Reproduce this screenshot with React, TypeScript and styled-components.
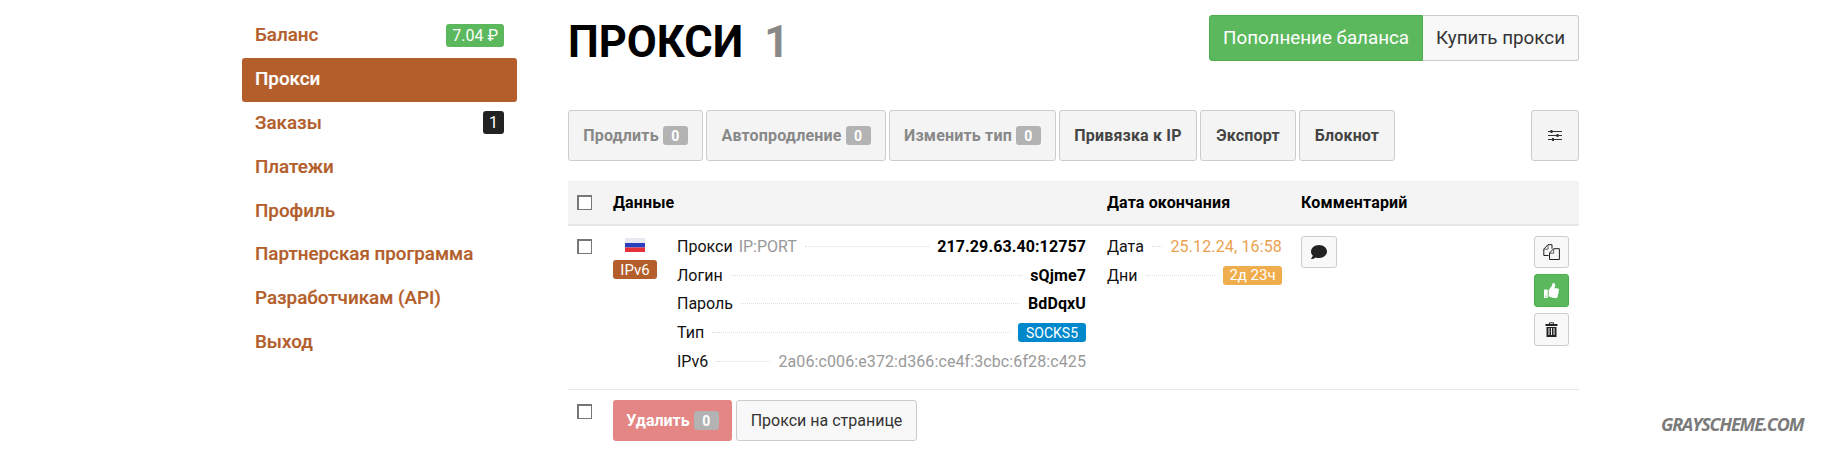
import React from "react";
import styled, { createGlobalStyle, css } from "styled-components";
import { FaComment, FaThumbsUp } from "react-icons/fa";

const GlobalStyle = createGlobalStyle`
  html, body {
    margin: 0;
    padding: 0;
    background: #fff;
  }
  body {
    font-family: Roboto, "Liberation Sans", sans-serif;
    color: #111;
  }
`;

const Page = styled.div`
  display: flex;
  gap: 51px;
  width: 1821px;
  height: 457px;
  padding: 14px 0 0 242px;
  box-sizing: border-box;
  overflow: hidden;
`;

const Sidebar = styled.nav`
  width: 275px;
  flex: none;
  display: flex;
  flex-direction: column;
`;

const NavItem = styled.a<{ $active?: boolean }>`
  height: 43.8px;
  padding: 0 13px 1px;
  box-sizing: border-box;
  display: flex;
  align-items: center;
  justify-content: space-between;
  border-radius: 3px;
  font-size: 18.8px;
  font-weight: 500;
  -webkit-text-stroke: 0.2px currentColor;
  color: ${({ $active }) => ($active ? "#fff" : "#b35e2b")};
  background: ${({ $active }) => ($active ? "#b35e2b" : "transparent")};
`;

const NavBadge = styled.span<{ $color: string }>`
  height: 23px;
  padding: 0 6px;
  display: flex;
  align-items: center;
  border-radius: 3px;
  font-size: 16px;
  font-weight: 400;
  -webkit-text-stroke: 0;
  color: #fff;
  background: ${({ $color }) => $color};
`;

const Main = styled.main`
  width: 1011px;
  flex: none;
`;

const Header = styled.header`
  height: 96px;
  display: flex;
  justify-content: space-between;
  align-items: flex-start;
`;

const Title = styled.h1`
  margin: 2px 0 0;
  font-size: 43.5px;
  line-height: 54px;
  font-weight: 700;
  color: #000;
  display: flex;
  gap: 21px;
`;

const TitleCount = styled.span`
  color: #888;
`;

const HeaderActions = styled.div`
  display: flex;
  margin-top: 1px;
`;

const HeaderButton = styled.button<{ $primary?: boolean }>`
  height: 46px;
  padding: 0 13px;
  font: 400 18.8px Roboto, sans-serif;
  ${({ $primary }) =>
    $primary
      ? css`
          color: #fff;
          background: #5cb85c;
          border: 1px solid #4cae4c;
          border-radius: 3px 0 0 3px;
        `
      : css`
          color: #333;
          background: #f8f8f8;
          border: 1px solid #ccc;
          border-left: 0;
          border-radius: 0 3px 3px 0;
        `}
`;

const Toolbar = styled.div`
  height: 51px;
  display: flex;
  gap: 3px;
  margin-bottom: 20px;
`;

const ToolButton = styled.button<{ $disabled?: boolean; $width: number }>`
  width: ${({ $width }) => $width}px;
  height: 51px;
  padding: 0;
  display: flex;
  align-items: center;
  justify-content: center;
  gap: 4px;
  background: #f4f4f4;
  border: 1px solid #ccc;
  border-radius: 3px;
  font: 700 16px Roboto, sans-serif;
  letter-spacing: 0.18px;
  color: ${({ $disabled }) => ($disabled ? "#888" : "#444")};
`;

const ToolSpacer = styled.div`
  flex: 1;
`;

const CountBadge = styled.span`
  min-width: 25px;
  height: 19px;
  display: inline-flex;
  align-items: center;
  justify-content: center;
  border-radius: 3px;
  background: #b3b3b3;
  color: #fff;
  font-size: 14px;
  font-weight: 700;
`;

const Checkbox = styled.span`
  display: block;
  width: 15px;
  height: 15px;
  box-sizing: border-box;
  background: #fff;
  border: 1px solid #777;
  border-top-width: 2px;
  border-left-width: 2px;
`;

const columns = css`
  display: grid;
  grid-template-columns: 45px 494px 194px 1fr;
`;

const TableHead = styled.div`
  ${columns}
  height: 45px;
  box-sizing: border-box;
  align-items: center;
  background: #f4f4f4;
  border-bottom: 2px solid #e6e6e6;
  font-size: 16px;
  font-weight: 700;
  letter-spacing: 0.15px;
  color: #000;
`;

const CheckCell = styled.div`
  padding-left: 9px;
`;

const TableRow = styled.div`
  ${columns}
  height: 164px;
  box-sizing: border-box;
  padding-top: 6px;
  border-bottom: 1px solid #e6e6e6;
`;

const RowCheck = styled(CheckCell)`
  padding-top: 7px;
`;

const DataCell = styled.div`
  display: flex;
`;

const FlagCell = styled.div`
  width: 64px;
  flex: none;
  display: flex;
  flex-direction: column;
  align-items: flex-start;
  gap: 8px;
  padding-top: 6px;
`;

const Flag = styled.svg`
  width: 20px;
  height: 14px;
  margin-left: 12px;
  display: block;
`;

const TypeTag = styled.span`
  width: 44px;
  height: 19px;
  display: flex;
  align-items: center;
  justify-content: center;
  border-radius: 3px;
  background: #b35e2b;
  color: #fff;
  font-size: 15px;
`;

const DetailList = styled.div<{ $width: number }>`
  width: ${({ $width }) => $width}px;
  display: flex;
  flex-direction: column;
`;

const DetailRow = styled.div`
  height: 28.75px;
  display: flex;
  align-items: center;
  font-size: 16px;
  color: #111;
`;

const Hint = styled.span`
  color: #999;
  margin-left: 6px;
`;

const Leader = styled.span`
  flex: 1;
  margin: 0 8px;
  border-bottom: 1px dotted #ddd;
`;

const StrongValue = styled.span`
  font-weight: 700;
  color: #000;
  letter-spacing: 0.1px;
`;

const MutedValue = styled.span`
  color: #999;
  letter-spacing: 0.1px;
`;

const DateValue = styled.span`
  color: #eba24f;
  letter-spacing: 0.15px;
`;

const Pill = styled.span<{ $color: string; $width: number; $size: number }>`
  width: ${({ $width }) => $width}px;
  height: 19px;
  display: flex;
  align-items: center;
  justify-content: center;
  border-radius: 3px;
  background: ${({ $color }) => $color};
  color: #fff;
  font-size: ${({ $size }) => $size}px;
`;

const DateCell = styled.div`
  display: flex;
`;

const ActionsCell = styled.div`
  display: flex;
  justify-content: space-between;
  padding: 4px 10px 0 0;
`;

const ActionStack = styled.div`
  display: flex;
  flex-direction: column;
  gap: 6px;
`;

const IconButton = styled.button<{ $success?: boolean; $wide?: boolean; $height: number }>`
  width: ${({ $wide }) => ($wide ? 36 : 35)}px;
  height: ${({ $height }) => $height}px;
  padding: 0;
  display: flex;
  align-items: center;
  justify-content: center;
  border-radius: 3px;
  border: 1px solid ${({ $success }) => ($success ? "#4cae4c" : "#ccc")};
  background: ${({ $success }) => ($success ? "#5cb85c" : "#f8f8f8")};
  color: ${({ $success }) => ($success ? "#fff" : "#222")};
`;

const Footer = styled.div`
  display: flex;
  align-items: flex-start;
  gap: 4px;
  padding-top: 10px;
`;

const FooterCheck = styled(CheckCell)`
  width: 45px;
  box-sizing: border-box;
  margin-right: -4px;
  padding-top: 4px;
`;

const DeleteButton = styled.button`
  width: 119px;
  height: 41px;
  padding: 0;
  display: flex;
  align-items: center;
  justify-content: center;
  gap: 4px;
  border: 0;
  border-radius: 3px;
  background: #e38684;
  color: #fff;
  font: 700 16px Roboto, sans-serif;
`;

const PageSizeButton = styled.button`
  width: 181px;
  height: 41px;
  padding: 0;
  background: #f8f8f8;
  border: 1px solid #ccc;
  border-radius: 3px;
  color: #333;
  font: 400 16px Roboto, sans-serif;
`;

const Watermark = styled.div`
  position: absolute;
  left: 1661px;
  top: 412px;
  font-family: "Open Sans", sans-serif;
  font-style: italic;
  font-weight: 700;
  font-size: 18px;
  letter-spacing: -1.15px;
  color: #7b7b7b;
`;

const SlidersIcon = () => (
  <svg width="14" height="13" viewBox="0 0 14 13" fill="none" stroke="#333">
    <path d="M0 2.5h14M0 6.5h14M0 10.5h14" strokeWidth="1" />
    <path d="M3.5 1v3M9.5 5v3M5 9v3" strokeWidth="2" />
  </svg>
);

const CopyIcon = () => (
  <svg width="17" height="16" viewBox="0 0 17 16" fill="none" stroke="#222" strokeWidth="1">
    <path d="M5.5 11.5H.8V5L5 .7h4v4" />
    <path d="M1 5.2h4V1" strokeWidth=".7" />
    <path d="M6.5 15.5V9l4.2-4.3h5.7v10.8z" fill="#f8f8f8" />
    <path d="M6.7 9.2h4V5" strokeWidth=".7" />
  </svg>
);

const TrashIcon = () => (
  <svg width="13" height="15" viewBox="0 0 13 15">
    <path d="M4.5 2V.8h4V2" fill="none" stroke="#333" />
    <path d="M.5 2h12v2H.5zM1.5 5h10v10h-10z" fill="#222" />
    <path d="M4 6v7M6.5 6v7M9 6v7" stroke="#f8f8f8" />
  </svg>
);

const navItems = ["Заказы", "Платежи", "Профиль", "Партнерская программа", "Разработчикам (API)", "Выход"];

const App: React.FC = () => {
  return (
    <>
      <GlobalStyle />
      <Page>
        <Sidebar>
          <NavItem>
            Баланс
            <NavBadge $color="#5cb85c">7.04 ₽</NavBadge>
          </NavItem>
          <NavItem $active>Прокси</NavItem>
          {navItems.map((item) => (
            <NavItem key={item}>
              {item}
              {item === "Заказы" && <NavBadge $color="#222">1</NavBadge>}
            </NavItem>
          ))}
        </Sidebar>
        <Main>
          <Header>
            <Title>
              ПРОКСИ <TitleCount>1</TitleCount>
            </Title>
            <HeaderActions>
              <HeaderButton $primary>Пополнение баланса</HeaderButton>
              <HeaderButton>Купить прокси</HeaderButton>
            </HeaderActions>
          </Header>
          <Toolbar>
            <ToolButton $disabled $width={135}>
              Продлить <CountBadge>0</CountBadge>
            </ToolButton>
            <ToolButton $disabled $width={180}>
              Автопродление <CountBadge>0</CountBadge>
            </ToolButton>
            <ToolButton $disabled $width={167}>
              Изменить тип <CountBadge>0</CountBadge>
            </ToolButton>
            <ToolButton $width={138}>Привязка к IP</ToolButton>
            <ToolButton $width={96}>Экспорт</ToolButton>
            <ToolButton $width={96}>Блокнот</ToolButton>
            <ToolSpacer />
            <ToolButton $width={48}>
              <SlidersIcon />
            </ToolButton>
          </Toolbar>
          <TableHead>
            <CheckCell>
              <Checkbox />
            </CheckCell>
            <div>Данные</div>
            <div>Дата окончания</div>
            <div>Комментарий</div>
          </TableHead>
          <TableRow>
            <RowCheck>
              <Checkbox />
            </RowCheck>
            <DataCell>
              <FlagCell>
                <Flag viewBox="0 0 20 14">
                  <rect width="20" height="5" fill="#e8e8f0" />
                  <rect y="5" width="20" height="4.5" fill="#2a3fc0" />
                  <rect y="9.5" width="20" height="4.5" fill="#e8303a" />
                </Flag>
                <TypeTag>IPv6</TypeTag>
              </FlagCell>
              <DetailList $width={409}>
                <DetailRow>
                  Прокси<Hint>IP:PORT</Hint>
                  <Leader />
                  <StrongValue>217.29.63.40:12757</StrongValue>
                </DetailRow>
                <DetailRow>
                  Логин
                  <Leader />
                  <StrongValue>sQjme7</StrongValue>
                </DetailRow>
                <DetailRow>
                  Пароль
                  <Leader />
                  <StrongValue>BdDqxU</StrongValue>
                </DetailRow>
                <DetailRow>
                  Тип
                  <Leader />
                  <Pill $color="#0088cc" $width={68} $size={14}>SOCKS5</Pill>
                </DetailRow>
                <DetailRow>
                  IPv6
                  <Leader />
                  <MutedValue>2a06:c006:e372:d366:ce4f:3cbc:6f28:c425</MutedValue>
                </DetailRow>
              </DetailList>
            </DataCell>
            <DateCell>
              <DetailList $width={175}>
                <DetailRow>
                  Дата
                  <Leader />
                  <DateValue>25.12.24, 16:58</DateValue>
                </DetailRow>
                <DetailRow>
                  Дни
                  <Leader />
                  <Pill $color="#f0ad4e" $width={59} $size={15}>2д 23ч</Pill>
                </DetailRow>
              </DetailList>
            </DateCell>
            <ActionsCell>
              <IconButton $wide $height={32}>
                <FaComment size={16} />
              </IconButton>
              <ActionStack>
                <IconButton $height={32}>
                  <CopyIcon />
                </IconButton>
                <IconButton $success $height={33}>
                  <FaThumbsUp size={15} />
                </IconButton>
                <IconButton $height={33}>
                  <TrashIcon />
                </IconButton>
              </ActionStack>
            </ActionsCell>
          </TableRow>
          <Footer>
            <FooterCheck>
              <Checkbox />
            </FooterCheck>
            <DeleteButton>
              Удалить <CountBadge>0</CountBadge>
            </DeleteButton>
            <PageSizeButton>Прокси на странице</PageSizeButton>
          </Footer>
        </Main>
      </Page>
      <Watermark>GRAYSCHEME.COM</Watermark>
    </>
  );
};

export default App;
